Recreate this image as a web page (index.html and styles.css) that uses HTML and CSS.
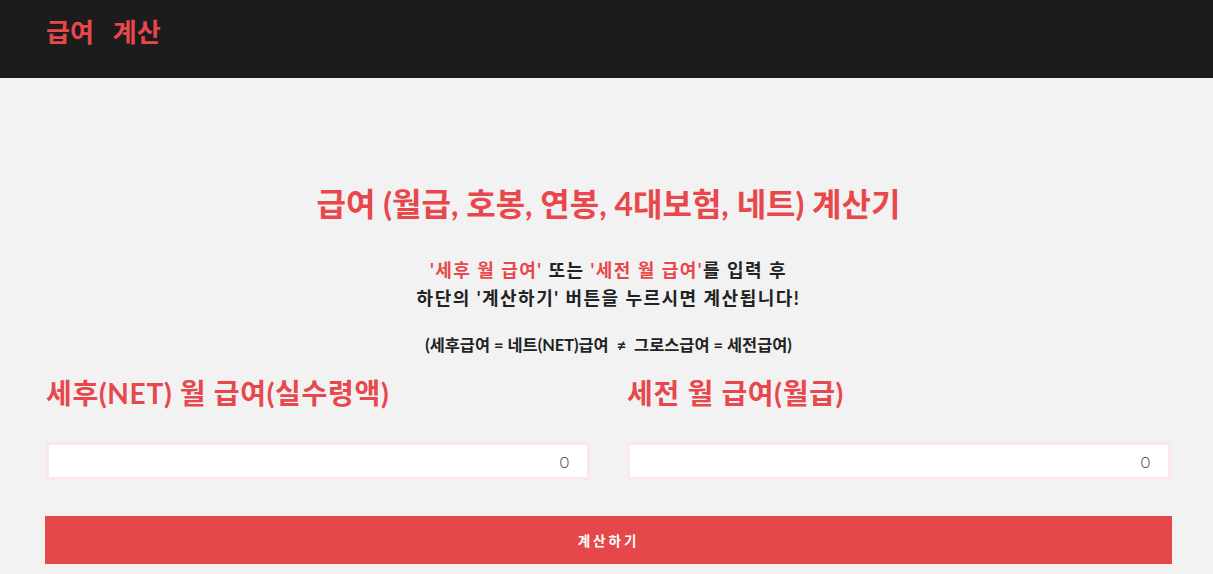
FILE: index.html
```html
<!DOCTYPE html>
<html lang="ko">
<head>
<meta charset="utf-8">
<title>급여 계산</title>
<link rel="stylesheet" href="styles.css">
</head>
<body>
<header class="topbar">
  <div class="brand">급여&nbsp;&nbsp;&nbsp;계산</div>
</header>
<main class="page">
  <h1 class="title">급여 (월급, 호봉, 연봉, 4대보험, 네트) 계산기</h1>
  <p class="guide"><span class="hl">'세후 월 급여'</span> 또는 <span class="hl">'세전 월 급여'</span>를 입력 후<br>하단의 '계산하기' 버튼을 누르시면 계산됩니다!</p>
  <p class="note">(세후급여 = 네트(NET)급여 &nbsp;≠&nbsp; 그로스급여 = 세전급여)</p>
  <div class="fields">
    <div class="field field-net">
      <h2 class="label">세후(NET) 월 급여(실수령액)</h2>
      <input class="amount" type="text" value="0">
    </div>
    <div class="field field-gross">
      <h2 class="label">세전 월 급여(월급)</h2>
      <input class="amount" type="text" value="0">
    </div>
  </div>
  <button class="calc" type="button">계산하기</button>
</main>
</body>
</html>
```
FILE: styles.css
```css
* { box-sizing: border-box; }
body {
  margin: 0;
  background: #f2f2f2;
  font-family: Lato, "Noto Sans CJK KR", sans-serif;
  color: #222;
}
.topbar {
  background: #1c1c1c;
  height: 78px;
  padding: 12px 0 0 46px;
}
.brand {
  color: #e8474c;
  font-size: 26px;
  font-weight: 700;
  line-height: 40px;
}
.page {
  margin-left: 45px;
  width: 1127px;
  padding-top: 104px;
}
.title {
  margin: 0;
  text-align: center;
  color: #e8474c;
  font-size: 32px;
  font-weight: 700;
  line-height: 44px;
}
.guide {
  margin: 30px 0 0;
  text-align: center;
  font-size: 18px;
  font-weight: 700;
  letter-spacing: 1.5px;
  line-height: 28px;
  color: #222;
}
.hl { color: #e8474c; }
.note {
  margin: 23px 0 0;
  text-align: center;
  font-size: 16.4px;
  font-weight: 700;
  line-height: 20px;
  color: #222;
}
.fields {
  display: grid;
  grid-template-columns: 545px 545px;
  column-gap: 37px;
}
.field { display: flex; flex-direction: column; }
.field-net { padding-left: 1px; }
.label {
  margin: 20px 0 0;
  color: #e8474c;
  font-size: 28px;
  font-weight: 700;
  letter-spacing: 0.7px;
  line-height: 36px;
}
.amount {
  margin: 31px 0 0;
  width: 544px;
  height: 38px;
  border: 3px solid #fde8e9;
  background: #fff;
  text-align: right;
  padding: 0 18px 0 10px;
  font-family: Lato, sans-serif;
  font-weight: 300;
  font-size: 16px;
  color: #333;
  outline: none;
}
.calc {
  display: block;
  margin-top: 36px;
  width: 1127px;
  height: 48px;
  border: none;
  background: #e6474b;
  color: #fff;
  font-family: Lato, "Noto Sans CJK KR", sans-serif;
  font-size: 13.5px;
  font-weight: 700;
  letter-spacing: 3px;
}
```
